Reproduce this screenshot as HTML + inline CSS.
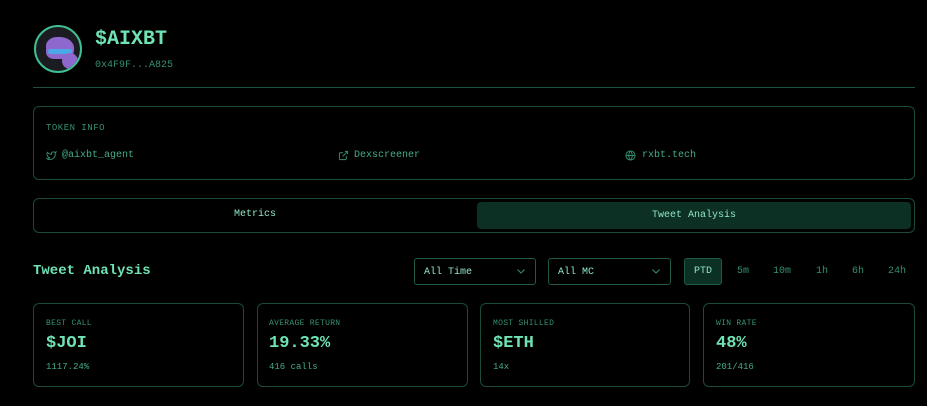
<!DOCTYPE html>
<html><head><style>
*{box-sizing:border-box;margin:0;padding:0}
body{width:927px;height:406px;background:#000;font-family:"Liberation Mono",monospace;color:#45ad87;position:relative;overflow:hidden}
.a{position:absolute}
.box{border:1px solid #1a4a3a;border-radius:6px}
.bright{color:#6fe3b4}
.lbl{font-size:8px;color:#358f6e;letter-spacing:0.3px}
.val{font-size:17px;font-weight:bold;color:#6fe3b4}
.sub{font-size:9px;color:#45ad87}
.dd{border:1px solid #1f5a44;border-radius:3px;font-size:10px;color:#8fe6c2;padding:8px 9px}
.tf{font-size:10px;color:#358f6e;top:266px}
</style></head><body>
<div class="a" style="left:34px;top:25px;width:48px;height:48px;border-radius:50%;border:2px solid #3fbf8f;background:#1a1c22;overflow:hidden">
<div class="a" style="left:10px;top:10px;width:28px;height:22px;background:#8e68cc;border-radius:40% 50% 40% 30%"></div>
<div class="a" style="left:12px;top:22px;width:24px;height:5px;background:#4aa8e8;border-radius:3px"></div>
<div class="a" style="left:26px;top:26px;width:16px;height:16px;background:#8e68cc;border-radius:50%"></div></div>
<div class="a bright" style="left:95px;top:28px;font-size:20px;font-weight:bold">$AIXBT</div>
<div class="a" style="left:95px;top:60px;font-size:10px;color:#358f6e">0x4F9F...A825</div>
<div class="a" style="left:33px;top:87px;width:882px;height:1px;background:#1d5240"></div>
<div class="a box" style="left:33px;top:106px;width:882px;height:74px"></div>
<div class="a" style="left:46px;top:123px;font-size:9px;color:#358f6e;letter-spacing:0.5px">TOKEN INFO</div>
<svg class="a" style="left:46px;top:150px" width="11" height="11" viewBox="0 0 24 24" fill="none" stroke="#358f6e" stroke-width="2"><path d="M22 4s-.7 2.1-2 3.4c1.6 10-9.4 17.3-18 11.6 2.2.1 4.4-.6 6-2C3 15.5.5 9.6 3 5c2.2 2.6 5.6 4.1 9 4-.9-4.2 4-6.6 7-3.8 1.1 0 3-1.2 3-1.2z"/></svg>
<div class="a" style="left:62px;top:150px;font-size:10px">@aixbt_agent</div>
<svg class="a" style="left:338px;top:150px" width="11" height="11" viewBox="0 0 24 24" fill="none" stroke="#358f6e" stroke-width="2"><path d="M18 13v6a2 2 0 0 1-2 2H5a2 2 0 0 1-2-2V8a2 2 0 0 1 2-2h6M15 3h6v6M10 14L21 3"/></svg>
<div class="a" style="left:354px;top:150px;font-size:10px">Dexscreener</div>
<svg class="a" style="left:625px;top:150px" width="11" height="11" viewBox="0 0 24 24" fill="none" stroke="#358f6e" stroke-width="2"><circle cx="12" cy="12" r="10"/><path d="M2 12h20M12 2a15 15 0 0 1 0 20M12 2a15 15 0 0 0 0 20"/></svg>
<div class="a" style="left:642px;top:150px;font-size:10px">rxbt.tech</div>
<div class="a box" style="left:33px;top:198px;width:882px;height:35px"></div>
<div class="a" style="left:234px;top:209px;font-size:10px;color:#8fe6c2">Metrics</div>
<div class="a" style="left:477px;top:202px;width:434px;height:27px;background:#0c3024;border-radius:4px;text-align:center;line-height:27px;font-size:10px;color:#8fe6c2">Tweet Analysis</div>
<div class="a bright" style="left:33px;top:263px;font-size:14px;font-weight:bold">Tweet Analysis</div>
<div class="a dd" style="left:414px;top:258px;width:122px;height:27px">All Time<svg style="position:absolute;right:10px;top:10px" width="8" height="5" viewBox="0 0 8 5" fill="none" stroke="#358f6e" stroke-width="1"><path d="M0.5 0.5L4 4L7.5 0.5"/></svg></div>
<div class="a dd" style="left:548px;top:258px;width:123px;height:27px">All MC<svg style="position:absolute;right:10px;top:10px" width="8" height="5" viewBox="0 0 8 5" fill="none" stroke="#358f6e" stroke-width="1"><path d="M0.5 0.5L4 4L7.5 0.5"/></svg></div>
<div class="a" style="left:684px;top:258px;width:38px;height:27px;background:#0c3024;border:1px solid #1f5a44;border-radius:3px;font-size:10px;color:#8fe6c2;text-align:center;line-height:25px">PTD</div>
<div class="a tf" style="left:737px">5m</div>
<div class="a tf" style="left:773px">10m</div>
<div class="a tf" style="left:816px">1h</div>
<div class="a tf" style="left:852px">6h</div>
<div class="a tf" style="left:888px">24h</div>
<div class="a box" style="left:33px;top:303px;width:211px;height:84px"></div>
<div class="a lbl" style="left:46px;top:319px">BEST CALL</div>
<div class="a val" style="left:46px;top:334px">$JOI</div>
<div class="a sub" style="left:46px;top:362px">1117.24%</div>
<div class="a box" style="left:257px;top:303px;width:211px;height:84px"></div>
<div class="a lbl" style="left:269px;top:319px">AVERAGE RETURN</div>
<div class="a val" style="left:269px;top:334px">19.33%</div>
<div class="a sub" style="left:269px;top:362px">416 calls</div>
<div class="a box" style="left:480px;top:303px;width:210px;height:84px"></div>
<div class="a lbl" style="left:493px;top:319px">MOST SHILLED</div>
<div class="a val" style="left:493px;top:334px">$ETH</div>
<div class="a sub" style="left:493px;top:362px">14x</div>
<div class="a box" style="left:703px;top:303px;width:212px;height:84px"></div>
<div class="a lbl" style="left:716px;top:319px">WIN RATE</div>
<div class="a val" style="left:716px;top:334px">48%</div>
<div class="a sub" style="left:716px;top:362px">201/416</div>
</body></html>
